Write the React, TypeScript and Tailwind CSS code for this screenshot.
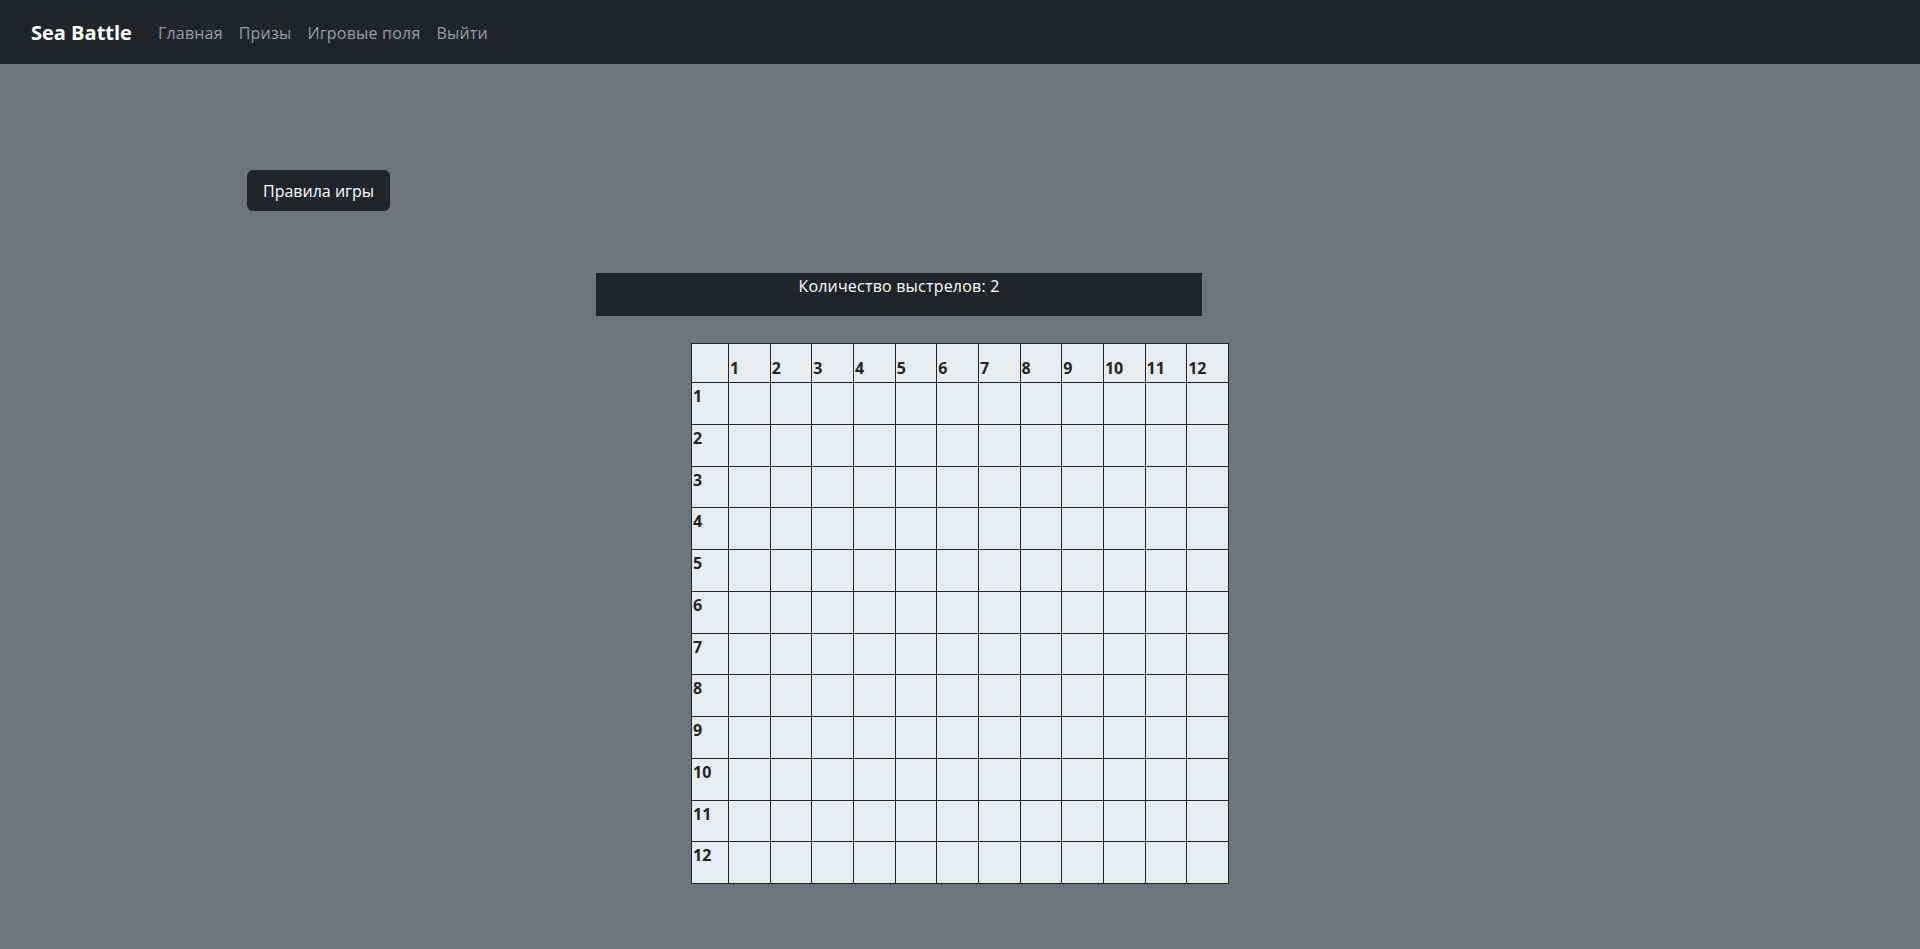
import React from 'react';

const NAV_LINKS = ['Главная', 'Призы', 'Игровые поля', 'Выйти'];
const SIZE = 12;

const Navbar = () => (
  <nav className="h-16 bg-[#212529] flex items-center px-[31px] pt-[2px]">
    <span className="text-white text-[20px] font-bold leading-[30px] mr-[18px]">Sea Battle</span>
    <div className="flex items-center">
      {NAV_LINKS.map((link) => (
        <a key={link} href="#" className="px-2 text-[16px] leading-6 tracking-[0.2px] text-[#9a9da0] hover:text-white">
          {link}
        </a>
      ))}
    </div>
  </nav>
);

const Board = () => {
  const nums = Array.from({ length: SIZE }, (_, i) => i + 1);
  return (
    <table className="table-fixed border-collapse w-[538px] bg-[#e9ecef] text-[#212529]">
      <thead>
        <tr className="h-[39px]">
          <th className="w-[37px] border border-[#212529] align-bottom"></th>
          {nums.map((n) => (
            <th key={n} className="border border-[#212529] align-bottom text-left font-bold text-[16px] leading-6 px-[1px] pb-[2px]">
              {n}
            </th>
          ))}
        </tr>
      </thead>
      <tbody>
        {nums.map((r) => (
          <tr key={r} className="h-[41.75px]">
            <th className="border border-[#212529] align-top text-left font-bold text-[16px] leading-6 px-[1px] pt-[1px]">
              {r}
            </th>
            {nums.map((c) => (
              <td key={c} className="border border-[#212529]"></td>
            ))}
          </tr>
        ))}
      </tbody>
    </table>
  );
};

const App: React.FC = () => {
  return (
    <div className="min-h-[949px] bg-[#6c757d] font-['Open_Sans',sans-serif]">
      <Navbar />

      <div className="pl-[247px] pt-[106px]">
        <button className="h-[41px] px-4 rounded-md bg-[#212529] text-white text-[16px] leading-6">
          Правила игры
        </button>
      </div>

      {/* shots counter */}
      <div className="ml-[596px] mt-[62px] w-[606px] h-[43px] pt-[1px] bg-[#212529] text-white text-center text-[16px] leading-6 tracking-[0.2px]">
        Количество выстрелов: 2
      </div>

      <div className="flex justify-center mt-[27px] pb-16">
        <Board />
      </div>
    </div>
  );
};

export default App;
